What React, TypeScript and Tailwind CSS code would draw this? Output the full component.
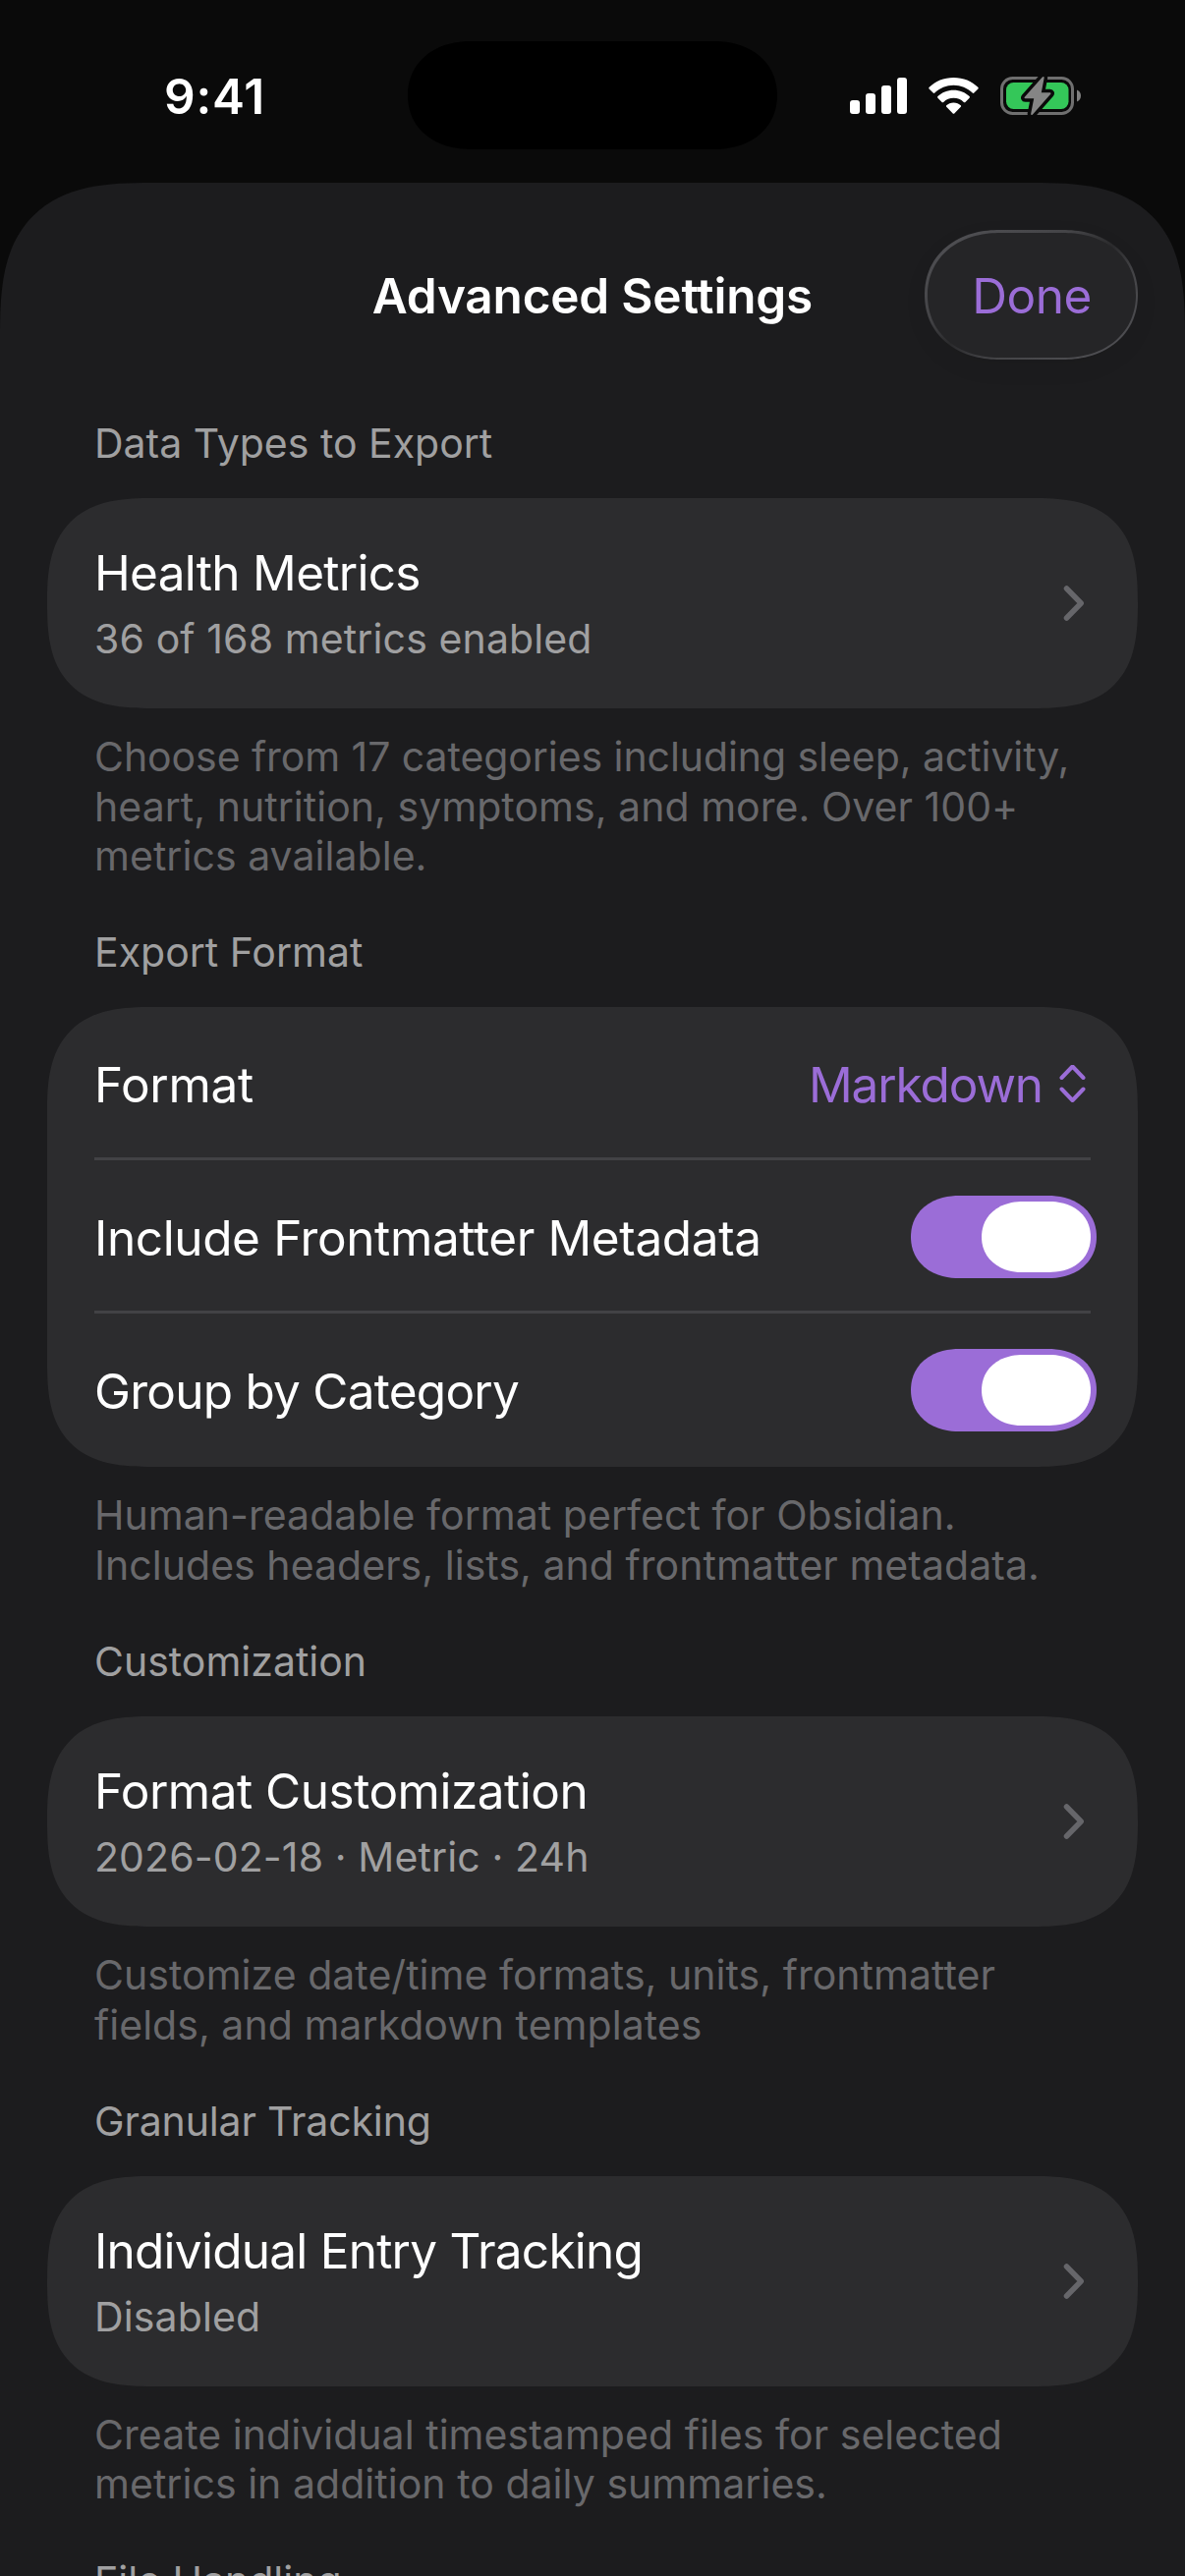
import { useState } from 'react'
import type { ReactNode } from 'react'

type LinkSection = {
  header: string
  headerClass?: string
  title: string
  titleClass: string
  subtitle: string
  footer: string[]
}

const metrics: LinkSection = {
  header: 'Data Types to Export',
  title: 'Health Metrics',
  titleClass: 'tracking-[-0.7px]',
  subtitle: '36 of 168 metrics enabled',
  footer: [
    'Choose from 17 categories including sleep, activity,',
    'heart, nutrition, symptoms, and more. Over 100+',
    'metrics available.',
  ],
}

const customization: LinkSection = {
  header: 'Customization',
  title: 'Format Customization',
  titleClass: 'tracking-[-0.5px]',
  subtitle: '2026-02-18 · Metric · 24h',
  footer: ['Customize date/time formats, units, frontmatter', 'fields, and markdown templates'],
}

const tracking: LinkSection = {
  header: 'Granular Tracking',
  headerClass: 'tracking-[-0.15px]',
  title: 'Individual Entry Tracking',
  titleClass: 'tracking-[-0.75px]',
  subtitle: 'Disabled',
  footer: ['Create individual timestamped files for selected', 'metrics in addition to daily summaries.'],
}

function StatusBar() {
  return (
    <div className="flex h-[186px] items-start">
      <div className="w-[415px] pt-[68px] pl-[167px] text-[49.5px] leading-[61px] font-semibold tracking-[0.8px] text-white">
        9:41
      </div>
      <div className="mt-[42px] h-[110px] w-[376px] rounded-[64px/55px] bg-black [corner-shape:superellipse(1.1)]" />
      <div className="flex gap-[22px] pt-[76px] pl-[74px]">
        {/* Signal */}
        <svg width="58" height="43" viewBox="0 0 58 43" fill="#fff">
          <rect x="0" y="26" width="10" height="14" rx="3" />
          <rect x="16" y="19" width="10" height="21" rx="3" />
          <rect x="32" y="11" width="10" height="29" rx="3" />
          <rect x="48" y="3" width="10" height="37" rx="3" />
        </svg>
        {/* Wifi */}
        <svg width="51" height="43" viewBox="0 0 51 43" fill="#fff">
          <path d="M25.500 3C35.300 3 44.200 6.700 50.300 12.800C50.900 13.400 50.900 14 50.400 14.500L46.300 18.600C45.800 19.100 45.200 19.100 44.700 18.600C39.500 13.600 32.900 10.700 25.500 10.700C18.100 10.700 11.500 13.600 6.300 18.600C5.800 19.100 5.200 19.100 4.700 18.600L.6 14.500C.1 14 .1 13.400 .7 12.800C6.800 6.700 15.700 3 25.500 3Z" />
          <path d="M25.500 15.800C31.800 15.800 37.400 18.100 41.600 22.100C42.100 22.600 42.100 23.200 41.600 23.700L37.400 27.900C36.900 28.400 36.400 28.400 35.800 27.900C33 25.300 29.500 23.800 25.500 23.800C21.500 23.800 18 25.300 15.200 27.900C14.600 28.400 14.100 28.400 13.600 27.900L9.400 23.700C8.900 23.200 8.900 22.600 9.400 22.100C13.600 18.100 19.200 15.800 25.500 15.800Z" />
          <path d="M25.500 28.400C28.400 28.400 31 29.500 32.800 31.200C33.300 31.700 33.300 32.200 32.800 32.700L26.500 39.300C25.900 40 25.100 40 24.500 39.300L18.200 32.700C17.700 32.200 17.700 31.700 18.200 31.200C20 29.500 22.600 28.400 25.500 28.400Z" />
        </svg>
        {/* Battery, charging */}
        <svg width="82" height="43" viewBox="0 0 82 43">
          <rect x="1.500" y="3.500" width="72" height="36" rx="11" fill="none" stroke="#6f6f6f" strokeWidth="3" />
          <rect x="6" y="8" width="63.500" height="27" rx="7.500" fill="#34c759" />
          <path d="M78 15.500C80.500 16.500 82 18.700 82 21.500C82 24.300 80.500 26.500 78 27.500Z" fill="#808080" />
          <path
            d="M42.800 2.500L24.800 22.800C24.200 23.500 24.500 24.300 25.500 24.300H34.200L31.200 39.500C31 41 32 41.500 33 40.400L51.200 19.700C51.800 19 51.500 18.200 50.500 18.200H41.800L44.600 3.500C44.900 2 43.900 1.300 42.800 2.500Z"
            fill="#0a0a0a"
            stroke="#0a0a0a"
            strokeWidth="7"
            strokeLinejoin="round"
          />
          <path
            d="M42.800 2.500L24.800 22.800C24.200 23.500 24.500 24.300 25.500 24.300H34.200L31.200 39.500C31 41 32 41.500 33 40.400L51.200 19.700C51.800 19 51.500 18.200 50.500 18.200H41.800L44.600 3.500C44.900 2 43.900 1.300 42.800 2.500Z"
            fill="#858585"
          />
        </svg>
      </div>
    </div>
  )
}

function NavBar() {
  return (
    <div className="flex h-[229px] items-start justify-end pr-12">
      <h1 className="mt-[85px] mr-[114px] text-[49.5px] leading-[61px] font-semibold tracking-[-0.2px] whitespace-nowrap text-white">
        Advanced Settings
      </h1>
      <button className="mt-12 h-[132px] w-[217px] rounded-[76px/66px] bg-[linear-gradient(to_bottom_right,#525256_0%,#444447_35%,#2a2a2c_50%,#444447_65%,#525256_100%)] p-[2.5px] shadow-[0_8px_24px_rgba(0,0,0,0.06)] [corner-shape:superellipse(1.1)]">
        <span className="flex h-full items-center justify-center rounded-[74px/63.5px] bg-[#252527] pt-[2px] pl-px text-[49.5px] leading-[61px] tracking-[-0.5px] text-[#9b6dd7] [corner-shape:superellipse(1.1)]">
          Done
        </span>
      </button>
    </div>
  )
}

function SectionHeader({ children, className = '' }: { children: ReactNode; className?: string }) {
  return <h2 className={`pb-[30px] pl-12 text-[41px] leading-[51px] text-[#a0a0a1] ${className}`}>{children}</h2>
}

function SectionFooter({ lines }: { lines: string[] }) {
  return (
    <p className="pt-[24.1px] pb-[47.7px] pl-12 text-[41px] leading-[50.5px] whitespace-nowrap text-[#68686b]">
      {lines.map(line => (
        <span key={line} className={line.length > 50 ? 'block tracking-[-0.07px]' : 'block tracking-[0.04px]'}>{line}</span>
      ))}
    </p>
  )
}

function Card({ children }: { children: ReactNode }) {
  return (
    <div className="rounded-[107px] bg-[#2c2c2e] [corner-shape:superellipse(1.45)]">{children}</div>
  )
}

function Chevron() {
  return (
    <svg width="22" height="38" viewBox="0 0 22 38" fill="none" stroke="#66666a" strokeWidth="5.500" strokeLinecap="round" strokeLinejoin="round">
      <path d="M3.500 4L18.200 19L3.500 34" />
    </svg>
  )
}

function LinkGroup({ section }: { section: LinkSection }) {
  return (
    <section>
      <SectionHeader className={section.headerClass}>{section.header}</SectionHeader>
      <Card>
        <div className="flex h-[214px] items-center justify-between pr-[54px] pl-12">
          <div className="flex flex-col gap-[11px] pt-px">
            <span className={`text-[49.5px] leading-[61px] text-white ${section.titleClass}`}>{section.title}</span>
            <span className="text-[41px] leading-[51px] tracking-[0.12px] text-[#a0a0a1]">{section.subtitle}</span>
          </div>
          <Chevron />
        </div>
      </Card>
      <SectionFooter lines={section.footer} />
    </section>
  )
}

function Toggle({ on, onChange }: { on: boolean; onChange: () => void }) {
  return (
    <button
      onClick={onChange}
      className={`flex h-[84px] w-[189px] items-center rounded-[49px/42px] px-[6px] [corner-shape:superellipse(1.1)] ${on ? 'justify-end bg-[#9b6dd7]' : 'justify-start bg-[#48484a]'}`}
    >
      <span className="h-[72px] w-[111px] rounded-[42px/36px] bg-white [corner-shape:superellipse(1.1)]" />
    </button>
  )
}

export default function App() {
  const [frontmatter, setFrontmatter] = useState(true)
  const [grouped, setGrouped] = useState(true)

  return (
    <div className="flex h-[2622px] w-[1206px] flex-col overflow-hidden bg-[#0a0a0a] font-['Inter','Liberation_Sans',sans-serif] antialiased">
      <StatusBar />
      <div className="flex-1 overflow-hidden rounded-t-[155px] bg-[#1c1c1e] [corner-shape:superellipse(1.5)]">
        <NavBar />
        <div className="flex flex-col px-12 pt-[11px]">
          <LinkGroup section={metrics} />

          <section>
            <SectionHeader>Export Format</SectionHeader>
            <Card>
              <div className="flex flex-col px-12 text-[49.5px] leading-[61px] text-white">
                <div className="flex h-[156px] items-center justify-between border-b-3 border-[#424245] pt-[5px]">
                  <span className="tracking-[-0.3px]">Format</span>
                  <div className="flex items-center gap-[18px] pr-[5px] text-[#9b6dd7]">
                    <span className="-mr-px tracking-[-1.1px]">Markdown</span>
                    <svg width="27" height="40" viewBox="0 0 27 40" fill="none" stroke="currentColor" strokeWidth="4" strokeLinecap="round" strokeLinejoin="round">
                      <path d="M2.500 13L13.500 1.500L24.500 13M2.500 24.500L13.500 36L24.500 24.500" />
                    </svg>
                  </div>
                </div>
                <div className="flex h-[156px] items-center justify-between border-b-3 border-[#424245] pt-[3px]">
                  <span className="pt-[2px] tracking-[-0.38px]">Include Frontmatter Metadata</span>
                  <div className="-mr-[6px]">
                    <Toggle on={frontmatter} onChange={() => setFrontmatter(!frontmatter)} />
                  </div>
                </div>
                <div className="flex h-[156px] items-center justify-between">
                  <span className="pt-[2px] tracking-[-0.75px]">Group by Category</span>
                  <div className="-mr-[6px]">
                    <Toggle on={grouped} onChange={() => setGrouped(!grouped)} />
                  </div>
                </div>
              </div>
            </Card>
            <SectionFooter
              lines={['Human-readable format perfect for Obsidian.', 'Includes headers, lists, and frontmatter metadata.']}
            />
          </section>

          <LinkGroup section={customization} />
          <LinkGroup section={tracking} />
          <SectionHeader>File Handling</SectionHeader>
        </div>
      </div>
    </div>
  )
}
